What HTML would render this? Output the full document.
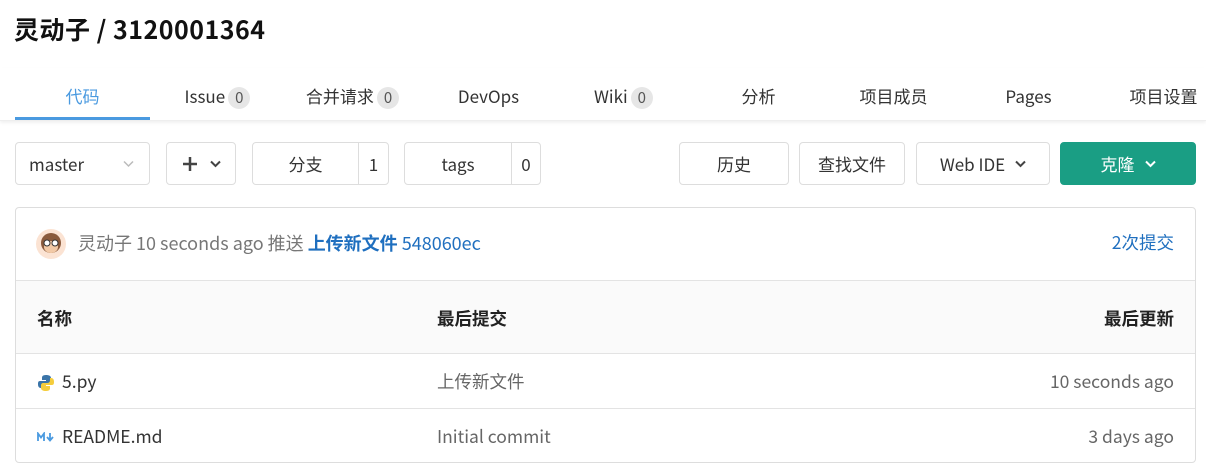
<!DOCTYPE html>
<html><head><meta charset="utf-8"><style>
*{box-sizing:border-box;margin:0;padding:0}
body{width:1206px;height:466px;background:#fff;font-family:"Noto Sans CJK SC","Liberation Sans",sans-serif;color:#333;position:relative;overflow:hidden;line-height:20px}
.abs{position:absolute}
h1{position:absolute;left:14px;top:14px;font-size:25px;line-height:30px;font-weight:bold;color:#111;letter-spacing:0.5px}
.tabs{position:absolute;left:0;top:68px;width:1206px;height:53px;border-bottom:1px solid #eee;box-shadow:0 2px 3px rgba(0,0,0,.06)}
.tab{position:absolute;top:17px;width:135px;text-align:center;font-size:17px;color:#333;white-space:nowrap;line-height:22px}
.tab.act{color:#4a9ae0}
.ul{position:absolute;left:15px;top:49px;width:135px;height:3px;background:#4a9ae0}
.bd{display:inline-block;background:#e6e6e6;border-radius:11px;font-size:15px;line-height:22px;padding:0 7px;color:#555;margin-left:3px;vertical-align:0}
.btn{position:absolute;top:142px;height:43px;border:1px solid #ddd;border-radius:4px;background:#fff;font-size:17px;display:flex;align-items:center;justify-content:center;color:#333}
.box{position:absolute;left:15px;top:207px;width:1181px;height:256px;border:1px solid #ddd;border-radius:4px}
.row{position:absolute;left:0;width:100%;border-top:1px solid #e3e3e3}
.t{position:absolute;font-size:17.5px;white-space:nowrap;line-height:22px}
</style></head><body>
<h1>灵动子 / 3120001364</h1>
<div class="tabs">
<div class="tab act" style="left:15px">代码</div>
<div class="tab" style="left:150px">Issue<span class="bd">0</span></div>
<div class="tab" style="left:285px">合并请求<span class="bd">0</span></div>
<div class="tab" style="left:421px">DevOps</div>
<div class="tab" style="left:556px">Wiki<span class="bd">0</span></div>
<div class="tab" style="left:691px">分析</div>
<div class="tab" style="left:826px">项目成员</div>
<div class="tab" style="left:961px">Pages</div>
<div class="tab" style="left:1096px">项目设置</div>
<div class="ul"></div>
</div>
<div class="btn" style="left:15px;width:135px;justify-content:flex-start;padding-left:13px">master<svg style="position:absolute;right:15px" width="11" height="8"><path d="M1 1.5L5.5 6 10 1.5" stroke="#bbb" stroke-width="1.5" fill="none"/></svg></div>
<div class="btn" style="left:166px;width:70px"><svg width="16" height="16" style="margin-right:12px"><path d="M8 1v14M1 8h14" stroke="#444" stroke-width="2.5"/></svg><svg width="11" height="8"><path d="M1 1.5L5.5 6 10 1.5" stroke="#444" stroke-width="2" fill="none"/></svg></div>
<div class="btn" style="left:252px;width:137px;justify-content:flex-start"><span style="width:105px;text-align:center">分支</span><span style="border-left:1px solid #ddd;height:100%;flex:1;display:flex;align-items:center;justify-content:center">1</span></div>
<div class="btn" style="left:404px;width:137px;justify-content:flex-start"><span style="width:106px;text-align:center">tags</span><span style="border-left:1px solid #ddd;height:100%;flex:1;display:flex;align-items:center;justify-content:center">0</span></div>
<div class="btn" style="left:679px;width:110px">历史</div>
<div class="btn" style="left:799px;width:106px">查找文件</div>
<div class="btn" style="left:916px;width:134px">Web IDE<svg width="11" height="8" style="margin-left:10px"><path d="M1 1.5L5.5 6 10 1.5" stroke="#444" stroke-width="2" fill="none"/></svg></div>
<div class="btn" style="left:1060px;width:136px;background:#1a9e84;border-color:#1a9e84;color:#fff">克隆<svg width="11" height="8" style="margin-left:10px"><path d="M1 1.5L5.5 6 10 1.5" stroke="#fff" stroke-width="2" fill="none"/></svg></div>
<div class="box">
<svg class="abs" style="left:19px;top:20px" width="32" height="32"><circle cx="16" cy="16" r="15" fill="#fbe3d3"/><circle cx="16" cy="15" r="10" fill="#8a5a3c"/><ellipse cx="16" cy="19" rx="7" ry="6" fill="#f2c9a6"/><circle cx="12" cy="15" r="3" fill="#fff" stroke="#333"/><circle cx="20" cy="15" r="3" fill="#fff" stroke="#333"/></svg>
<div class="t" style="left:62px;top:24px;color:#777;font-size:18px">灵动子 10 seconds ago 推送 <b style="color:#1f6fbf">上传新文件</b> <span style="color:#1f6fbf">548060ec</span></div>
<div class="t" style="right:21px;top:24px;color:#1f6fbf">2次提交</div>
<div class="row" style="top:72px;height:74px;background:#fafafa"></div>
<div class="t" style="left:21px;top:100px;font-weight:bold;color:#222">名称</div>
<div class="t" style="left:421px;top:100px;font-weight:bold;color:#222">最后提交</div>
<div class="t" style="right:21px;top:100px;font-weight:bold;color:#222">最后更新</div>
<div class="row" style="top:145px"></div>
<svg class="abs" style="left:21px;top:166px" width="18" height="18"><path d="M9 1C5 1 5 3 5 4v2h4v1H3C1 7 1 9 1 10s0 4 3 4h1v-2c0-2 1-3 3-3h4c1 0 2-1 2-2V4c0-2-2-3-5-3z" fill="#3a74a8"/><path d="M9 17c4 0 4-2 4-3v-2H9v-1h6c2 0 2-2 2-3s0-4-3-4h-1v2c0 2-1 3-3 3H6c-1 0-2 1-2 2v3c0 2 2 3 5 3z" fill="#f5cd3c"/></svg>
<div class="t" style="left:46px;top:163px">5.py</div>
<div class="t" style="left:421px;top:163px;color:#666">上传新文件</div>
<div class="t" style="right:21px;top:163px;color:#666">10 seconds ago</div>
<div class="row" style="top:200px"></div>
<svg class="abs" style="left:21px;top:224px" width="18" height="10"><path d="M1 9V1.5l3 4 3-4V9" stroke="#4a9ae0" stroke-width="1.8" fill="none"/><path d="M13 1v7M10 5l3 3.5 3-3.5" stroke="#4a9ae0" stroke-width="1.8" fill="none"/></svg>
<div class="t" style="left:46px;top:218px">README.md</div>
<div class="t" style="left:421px;top:218px;color:#666">Initial commit</div>
<div class="t" style="right:21px;top:218px;color:#666">3 days ago</div>
</div>
</body></html>
